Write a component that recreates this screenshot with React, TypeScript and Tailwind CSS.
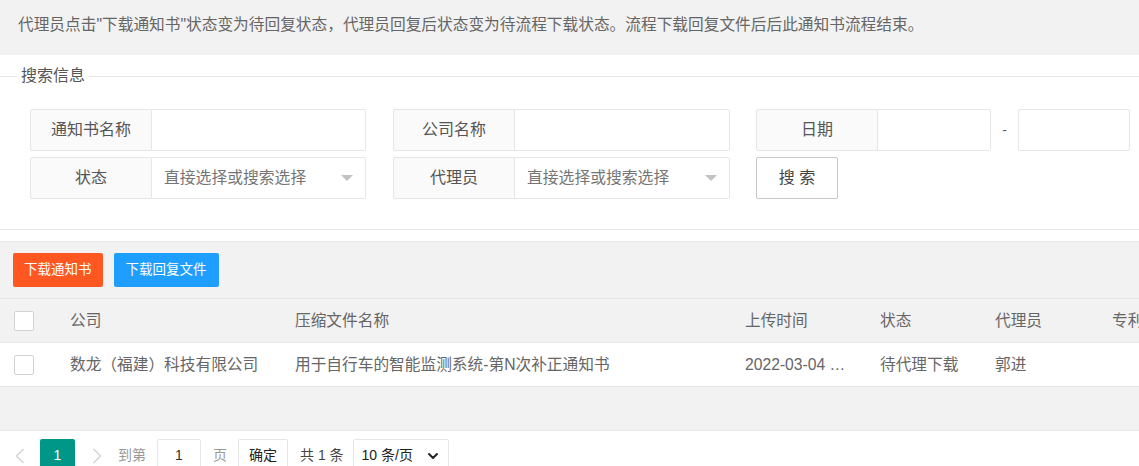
import { ChevronDown } from "lucide-react";

/* ─────────────── Search form field ──────────────── */
function Field({ label, width, select }: { label: string; width: string; select?: boolean }) {
    return (
        <div className={`flex h-[42px] ${width}`}>
            <div className="w-[122px] shrink-0 flex items-center justify-center bg-[#fafafa] border border-[#e6e6e6] rounded-l-[2px] text-[16px] text-[#555]">
                {label}
            </div>
            <div className="flex-1 flex items-center justify-between bg-white border border-l-0 border-[#e6e6e6] rounded-r-[2px] pl-[12px] pr-[12px]">
                {select && (
                    <>
                        <span className="text-[15.8px] text-[#757575]">直接选择或搜索选择</span>
                        <span className="w-0 h-0 border-x-[6px] border-t-[6px] border-x-transparent border-t-[#c2c2c2]" />
                    </>
                )}
            </div>
        </div>
    );
}

function Checkbox() {
    return <div className="w-[20px] h-[20px] border border-[#d2d2d2] rounded-[2px] bg-white" />;
}

const COLS = [
    "shrink-0 w-[55px] pl-[14px]",
    "shrink-0 w-[225px] pl-[15px]",
    "shrink-0 w-[450px] pl-[15px]",
    "shrink-0 w-[135px] pl-[15px] pr-[15px]",
    "shrink-0 w-[115px] pl-[15px]",
    "shrink-0 w-[117px] pl-[15px]",
    "shrink-0 w-[120px] pl-[15px]",
];

export default function App() {
    return (
        <div className="w-[1139px] h-[466px] overflow-hidden bg-white text-[#666] font-['Liberation_Sans','Noto_Sans_CJK_SC',sans-serif]">
            {/* Notice banner */}
            <div className="h-[55px] bg-[#f2f2f2] flex items-center pl-[18px] pb-[5px] text-[15.7px] whitespace-nowrap">
                代理员点击"下载通知书"状态变为待回复状态，代理员回复后状态变为待流程下载状态。流程下载回复文件后后此通知书流程结束。
            </div>

            {/* Search fieldset */}
            <div className="h-[175px] pt-[12px] border-b border-[#e6e6e6]">
                <div className="flex items-center h-[18px]">
                    <div className="w-[17px] h-px bg-[#e6e6e6]" />
                    <span className="px-[4px] text-[16px] leading-[18px] text-[#555]">搜索信息</span>
                    <div className="flex-1 h-px bg-[#e6e6e6]" />
                </div>

                <div className="mt-[24px] pl-[30px] flex flex-col gap-[6px]">
                    <div className="flex items-center">
                        <Field label="通知书名称" width="w-[336px]" />
                        <div className="ml-[27px]"><Field label="公司名称" width="w-[337px]" /></div>
                        <div className="ml-[26px]"><Field label="日期" width="w-[235px]" /></div>
                        <div className="w-[27px] text-center text-[14px]">-</div>
                        <div className="w-[112px] h-[42px] border border-[#e6e6e6] rounded-[2px]" />
                    </div>
                    <div className="flex items-center">
                        <Field label="状态" width="w-[336px]" select />
                        <div className="ml-[27px]"><Field label="代理员" width="w-[337px]" select /></div>
                        <button className="ml-[26px] w-[82px] h-[42px] border border-[#c9c9c9] rounded-[2px] bg-white text-[16px] text-[#444]">
                            搜 索
                        </button>
                    </div>
                </div>
            </div>
            <div className="h-[11px]" />

            {/* Table area */}
            <div className="bg-[#f2f2f2] border-t border-[#e6e6e6]">
                <div className="flex gap-[11px] px-[13px] py-[11px]">
                    <button className="h-[34px] px-[11px] rounded-[2px] bg-[#ff5722] text-white text-[13.5px]">下载通知书</button>
                    <button className="h-[34px] px-[12px] rounded-[2px] bg-[#1e9fff] text-white text-[13.5px]">下载回复文件</button>
                </div>

                {/* Header row */}
                <div className="flex items-center h-[44px] border-t border-[#e6e6e6] text-[15.7px] whitespace-nowrap overflow-hidden">
                    <div className={COLS[0]}><Checkbox /></div>
                    <div className={COLS[1]}>公司</div>
                    <div className={COLS[2]}>压缩文件名称</div>
                    <div className={COLS[3]}>上传时间</div>
                    <div className={COLS[4]}>状态</div>
                    <div className={COLS[5]}>代理员</div>
                    <div className={COLS[6]}>专利</div>
                </div>

                {/* Body row */}
                <div className="flex items-center h-[45px] bg-white border-y border-[#e6e6e6] text-[15.7px] whitespace-nowrap overflow-hidden">
                    <div className={COLS[0]}><Checkbox /></div>
                    <div className={COLS[1]}>数龙（福建）科技有限公司</div>
                    <div className={COLS[2]}>用于自行车的智能监测系统-第N次补正通知书</div>
                    <div className={`${COLS[3]} truncate`}>2022-03-04 10:21:36</div>
                    <div className={COLS[4]}>待代理下载</div>
                    <div className={COLS[5]}>郭进</div>
                    <div className={COLS[6]}></div>
                </div>
                <div className="h-[43px]" />
            </div>

            {/* Pagination */}
            <div className="border-t border-[#e6e6e6] bg-white pt-[8px] pl-[15px] flex items-start text-[14px]">
                <div className="w-[25px] h-[33px] flex items-center">
                    <svg width="10" height="16" viewBox="0 0 10 16"><polyline points="8.5,1 1.5,8 8.5,15" fill="none" stroke="#d2d2d2" strokeWidth="1.4" /></svg>
                </div>
                <div className="w-[35px] h-[33px] bg-[#009688] text-white flex items-center justify-center rounded-[2px]">1</div>
                <div className="w-[43px] h-[33px] flex items-center justify-center">
                    <svg width="10" height="16" viewBox="0 0 10 16"><polyline points="1.5,1 8.5,8 1.5,15" fill="none" stroke="#d2d2d2" strokeWidth="1.4" /></svg>
                </div>
                <div className="h-[33px] flex items-center text-[#999]">到第</div>
                <div className="ml-[11px] w-[44px] h-[33px] border border-[#e6e6e6] rounded-[2px] flex items-center justify-center text-[#333]">1</div>
                <div className="ml-[12px] h-[33px] flex items-center text-[#999]">页</div>
                <div className="ml-[11px] w-[50px] h-[33px] border border-[#e6e6e6] rounded-[2px] flex items-center justify-center text-[#222]">确定</div>
                <div className="ml-[12px] h-[33px] flex items-center text-[#444]">共 1 条</div>
                <div className="ml-[9px] w-[96px] h-[33px] border border-[#e6e6e6] rounded-[2px] flex items-center justify-between pl-[8px] pr-[7px] text-[#222]">
                    <span>10 条/页</span>
                    <ChevronDown size={16} strokeWidth={3} className="text-[#222]" />
                </div>
            </div>
        </div>
    );
}
